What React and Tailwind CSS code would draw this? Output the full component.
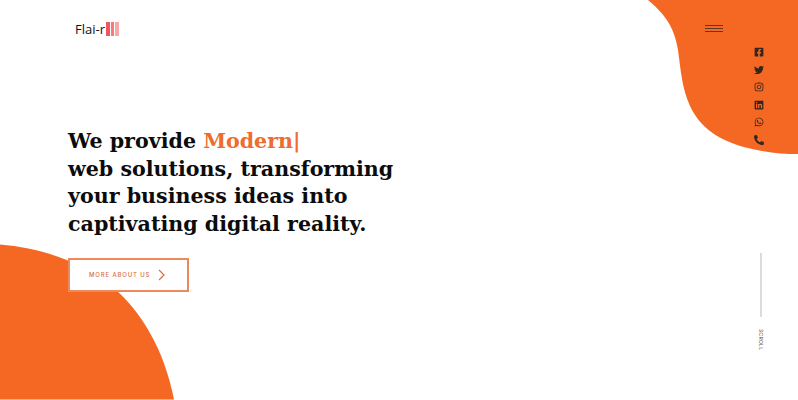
import React from 'react';
import { FaFacebookSquare, FaTwitter, FaInstagram, FaLinkedin, FaWhatsapp, FaPhoneAlt } from 'react-icons/fa';

const SOCIALS = [FaFacebookSquare, FaTwitter, FaInstagram, FaLinkedin, FaWhatsapp, FaPhoneAlt];

/* ─── Background blobs ──────────────────────────────────────── */
const TopBlob = () => (
  <svg className="absolute top-0 right-0" width="150" height="155" viewBox="648 0 150 155">
    <path fill="#f56823" d="M648 0C662 12 674 24 678 50C681 72 682 88 690 106C702 132 726 144 757 150C772 153 785 154 798 154L798 0Z" />
  </svg>
);

const BottomBlob = () => (
  <svg className="absolute bottom-0 left-0" width="175" height="156" viewBox="0 245 175 155">
    <path fill="#f56823" d="M0 245C40 248 80 262 110 285C142 312 164 350 174 400L0 400Z" />
  </svg>
);

const Logo = () => (
  <div className="flex items-center">
    <span className="text-[13px] leading-none text-[#111] font-['Open_Sans',sans-serif]">Flai-r</span>
    <div className="flex gap-px ml-px h-[14px]">
      <div className="w-[3.7px] bg-[#f4555a]" />
      <div className="w-[3.7px] bg-[#f6797c]" />
      <div className="w-[3.7px] bg-[#f9a9a5]" />
    </div>
  </div>
);

export default function App() {
  return (
    <div className="relative flex w-full h-[400px] overflow-hidden bg-white">
      <TopBlob />
      <BottomBlob />

      {/* Left column */}
      <div className="relative flex-1 flex flex-col pl-[68px]">
        <div className="pl-[7px] pt-[22px]">
          <Logo />
        </div>

        <h1 className="mt-[92px] text-[20.6px] leading-[27.7px] font-bold text-[#0c0c0c] font-['DejaVu_Serif',serif]">
          We provide <span className="text-[#ee6c2e]">Modern|</span>
          <br />
          web solutions, transforming
          <br />
          your business ideas into
          <br />
          captivating digital reality.
        </h1>

        <button className="mt-[19px] w-[121px] h-[34px] pl-[19px] flex items-center gap-[8px] bg-white border-2 border-[#ec8a5c] text-[#d9703c]">
          <span className="text-[6px] tracking-[0.14em] uppercase font-medium whitespace-nowrap font-['Inter',sans-serif]">
            More about us
          </span>
          <svg width="8" height="12" viewBox="0 0 8 12" fill="none" stroke="currentColor" strokeWidth="1.2">
            <path d="M1 1l5 5-5 5" />
          </svg>
        </button>
      </div>

      {/* Right rail */}
      <div className="relative w-[93px] flex flex-col">
        <div className="mt-[25px] w-[18px] flex flex-col gap-[2px]">
          <div className="h-px bg-[#5a3a28]" />
          <div className="h-px bg-[#5a3a28]" />
          <div className="h-px bg-[#5a3a28]" />
        </div>

        <div className="mt-[15px] ml-[49px] w-[10px] flex flex-col gap-[7.5px] text-[#33261f]">
          {SOCIALS.map((Icon, i) => (
            <Icon key={i} size={10} />
          ))}
        </div>

        <div className="mt-[108px] ml-[55px] w-[2px] h-[64px] bg-[#dcdcdc]" />

        <span className="mt-[12px] ml-[52px] self-start text-[5px] leading-[7px] tracking-[0.06em] uppercase text-[#555] [writing-mode:vertical-rl] font-['Inter',sans-serif]">
          Scroll
        </span>
      </div>
    </div>
  );
}
